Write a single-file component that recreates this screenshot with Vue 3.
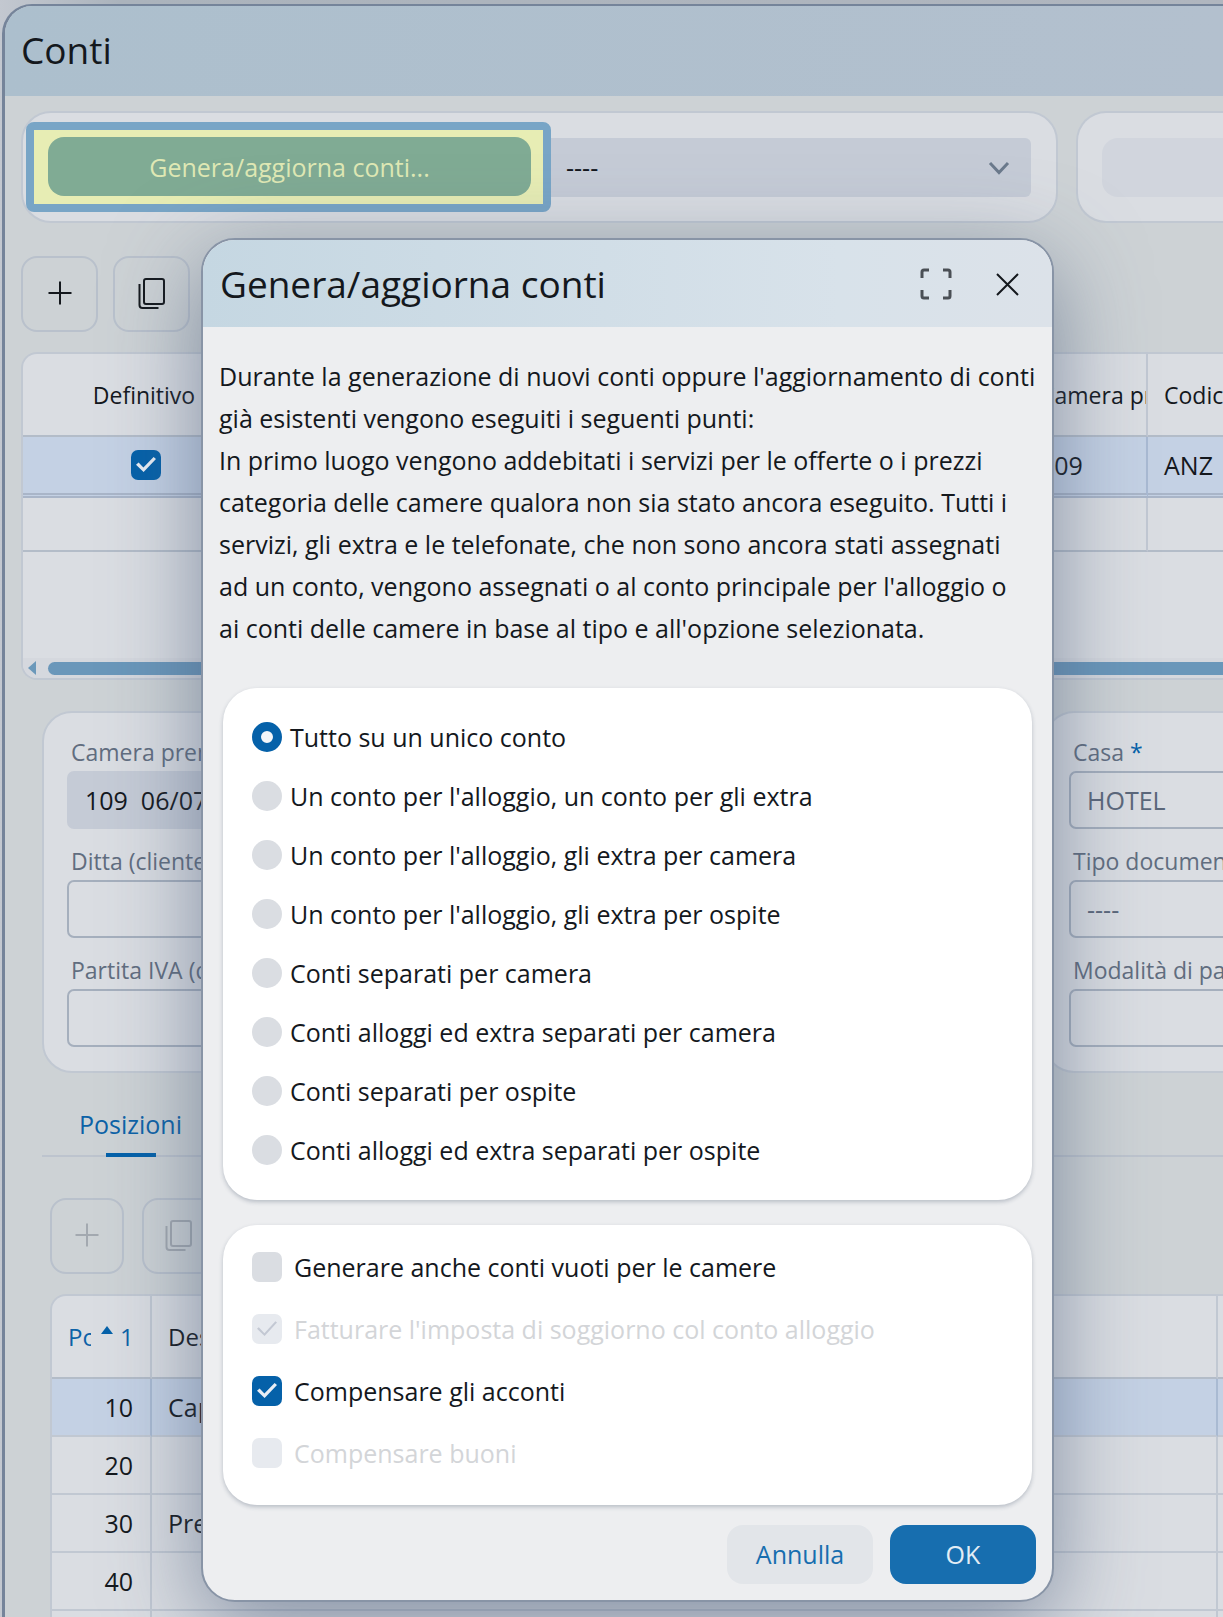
<template>
  <div class="page">
    <div class="window">
      <header class="window-header">
        <h1>Conti</h1>
      </header>

      <div class="top-bar">
        <div class="panel action-panel">
          <div class="highlight">
            <button type="button" class="generate-btn">Genera/aggiorna conti...</button>
          </div>
          <div class="select-wrap">
            <select v-model="filter" class="filter-select" aria-label="Filtro">
              <option value="">----</option>
            </select>
            <svg class="chevron" viewBox="0 0 24 16" aria-hidden="true">
              <path d="M3 3l9 9.500L21 3" />
            </svg>
          </div>
        </div>
        <div class="panel side-panel">
          <button type="button" class="empty-btn" aria-label="Opzioni"></button>
        </div>
      </div>

      <div class="icon-row">
        <button type="button" class="icon-btn" aria-label="Nuovo">
          <svg viewBox="0 0 30 30"><path d="M15 3.500v23M3.500 15h23" /></svg>
        </button>
        <button type="button" class="icon-btn" aria-label="Duplica">
          <svg class="copy" viewBox="0 0 30 34">
            <rect x="7" y="3" width="20" height="25" rx="2" />
            <path d="M2.500 8v21q0 3 3 3h16" />
          </svg>
        </button>
      </div>

      <div class="grid">
        <table>
          <colgroup>
            <col class="col-def" />
            <col />
            <col class="col-room" />
            <col class="col-code" />
          </colgroup>
          <thead>
            <tr>
              <th class="center">Definitivo</th>
              <th></th>
              <th>Camera pre</th>
              <th>Codice</th>
            </tr>
          </thead>
          <tbody>
            <tr class="selected">
              <td class="center">
                <input v-model="definitive" type="checkbox" class="check" aria-label="Definitivo" />
              </td>
              <td></td>
              <td>109</td>
              <td>ANZ</td>
            </tr>
            <tr>
              <td></td>
              <td></td>
              <td></td>
              <td></td>
            </tr>
          </tbody>
        </table>
        <div class="scrollbar">
          <svg viewBox="0 0 8 14" aria-hidden="true"><path d="M8 0v14L0 7z" /></svg>
          <div class="thumb"></div>
        </div>
      </div>

      <div class="details">
        <div class="forms">
          <div class="panel form-panel">
            <div v-for="field in leftFields" :key="field.id" class="field">
              <label :for="field.id">{{ field.label }}</label>
              <input :id="field.id" v-model="field.value" type="text" :class="{ filled: field.filled }" />
            </div>
          </div>
          <div class="panel form-panel form-side">
            <div v-for="field in rightFields" :key="field.id" class="field">
              <label :for="field.id">{{ field.label }}<span v-if="field.required" class="required"> *</span></label>
              <select :id="field.id" v-model="field.value">
                <option :value="field.value">{{ field.value }}</option>
              </select>
            </div>
          </div>
        </div>

        <nav class="tabs">
          <a href="#posizioni" class="tab">Posizioni</a>
        </nav>

        <div class="positions">
          <div class="icon-row small">
            <button type="button" class="icon-btn" disabled aria-label="Nuova posizione">
              <svg viewBox="0 0 30 30"><path d="M15 3.500v23M3.500 15h23" /></svg>
            </button>
            <button type="button" class="icon-btn" disabled aria-label="Duplica posizione">
              <svg class="copy" viewBox="0 0 30 34">
                <rect x="7" y="3" width="20" height="25" rx="2" />
                <path d="M2.500 8v21q0 3 3 3h16" />
              </svg>
            </button>
          </div>
          <div class="pos-grid">
            <table>
              <colgroup>
                <col class="col-pos" />
                <col />
                <col class="col-end" />
              </colgroup>
              <thead>
                <tr>
                  <th>
                    <div class="sorted">
                      <span class="cut">Pos</span>
                      <svg viewBox="0 0 12 8" aria-hidden="true"><path d="M6 0l6 8H0z" /></svg>
                      <span>1</span>
                    </div>
                  </th>
                  <th>Descrizione</th>
                  <th></th>
                </tr>
              </thead>
              <tbody>
                <tr v-for="row in positions" :key="row.pos" :class="{ selected: row.pos === '10' }">
                  <td class="number">{{ row.pos }}</td>
                  <td>{{ row.text }}</td>
                  <td></td>
                </tr>
              </tbody>
            </table>
          </div>
        </div>
      </div>
    </div>

    <div class="dialog" role="dialog" aria-labelledby="dialog-title">
      <header class="dialog-header">
        <h2 id="dialog-title">Genera/aggiorna conti</h2>
        <button type="button" class="head-btn" aria-label="Schermo intero">
          <svg viewBox="0 0 32 32">
            <path d="M2 10V4q0-2 2-2h5M23 2h5q2 0 2 2v6M30 22v6q0 2-2 2h-5M9 30H4q-2 0-2-2v-6" class="thick" />
          </svg>
        </button>
        <button type="button" class="head-btn" aria-label="Chiudi">
          <svg viewBox="0 0 32 32"><path d="M5 6l21 21M26 6L5 27" /></svg>
        </button>
      </header>

      <div class="dialog-body">
        <p class="intro">
          Durante la generazione di nuovi conti oppure l'aggiornamento di conti<br />
          già esistenti vengono eseguiti i seguenti punti:<br />
          In primo luogo vengono addebitati i servizi per le offerte o i prezzi<br />
          categoria delle camere qualora non sia stato ancora eseguito. Tutti i<br />
          servizi, gli extra e le telefonate, che non sono ancora stati assegnati<br />
          ad un conto, vengono assegnati o al conto principale per l'alloggio o<br />
          ai conti delle camere in base al tipo e all'opzione selezionata.
        </p>

        <div class="card">
          <label v-for="(mode, index) in modes" :key="index" class="radio-row">
            <input v-model="selectedMode" type="radio" name="mode" class="radio" :value="index" />
            {{ mode }}
          </label>
        </div>

        <div class="card checks">
          <label v-for="option in options" :key="option.text" class="check-row" :class="{ disabled: option.disabled }">
            <input v-model="option.checked" type="checkbox" class="check" :disabled="option.disabled" />
            {{ option.text }}
          </label>
        </div>
      </div>

      <footer class="dialog-footer">
        <button type="button" class="btn btn-cancel">Annulla</button>
        <button type="button" class="btn btn-ok">OK</button>
      </footer>
    </div>
  </div>
</template>

<script setup>
import { ref } from 'vue'

const filter = ref('')
const definitive = ref(true)
const selectedMode = ref(0)

const leftFields = ref([
  { id: 'camera', label: 'Camera prenotata', value: '109  06/07', filled: true },
  { id: 'ditta', label: 'Ditta (cliente)', value: '' },
  { id: 'iva', label: 'Partita IVA (ditta)', value: '' }
])

const rightFields = ref([
  { id: 'casa', label: 'Casa', value: 'HOTEL', required: true },
  { id: 'tipo', label: 'Tipo documento', value: '----' },
  { id: 'modalita', label: 'Modalità di pagamento', value: '' }
])

const positions = [
  { pos: '10', text: 'Capodanno' },
  { pos: '20', text: '' },
  { pos: '30', text: 'Prenotazione' },
  { pos: '40', text: '' },
  { pos: '', text: '' }
]

const modes = [
  'Tutto su un unico conto',
  "Un conto per l'alloggio, un conto per gli extra",
  "Un conto per l'alloggio, gli extra per camera",
  "Un conto per l'alloggio, gli extra per ospite",
  'Conti separati per camera',
  'Conti alloggi ed extra separati per camera',
  'Conti separati per ospite',
  'Conti alloggi ed extra separati per ospite'
]

const options = ref([
  { text: 'Generare anche conti vuoti per le camere', checked: false, disabled: false },
  { text: "Fatturare l'imposta di soggiorno col conto alloggio", checked: true, disabled: true },
  { text: 'Compensare gli acconti', checked: true, disabled: false },
  { text: 'Compensare buoni', checked: false, disabled: true }
])
</script>

<style>
body {
  margin: 0;
}
</style>

<style scoped>
.page {
  position: relative;
  height: 100vh;
  overflow: hidden;
  box-sizing: border-box;
  padding: 4px 0 0 2px;
  background: linear-gradient(90deg, #c3c8d0, #abb3bc 120px, #b0b6bf);
  color: #14181d;
  font-family: "Open Sans", "Noto Sans", sans-serif;
  font-size: 25px;
}

.page *,
.page *::before {
  box-sizing: border-box;
}

button,
input,
select {
  margin: 0;
  color: inherit;
  font: inherit;
}

svg {
  display: block;
  fill: none;
  stroke: currentColor;
  stroke-width: 2;
}

.window {
  border: 2px solid #75849a;
  border-left-width: 3px;
  border-right: none;
  border-bottom: none;
  border-radius: 30px 0 0 0;
  height: 100%;
  overflow: hidden;
  background: #cdd2d5;
}

.window-header {
  height: 90px;
  display: flex;
  align-items: center;
  padding-left: 16px;
  background: linear-gradient(90deg, #acbfcd, #b3c0ce);
}

h1,
h2 {
  margin: 0;
  font-size: 37px;
  font-weight: 400;
  line-height: 48px;
}

h1 {
  padding-bottom: 2px;
}

.panel {
  border: 2px solid #c1c8d2;
  border-radius: 30px;
  background: #dadde2;
}

.top-bar {
  display: flex;
  gap: 18px;
  padding: 15px 0 0 16px;
}

.action-panel {
  flex: 1;
  height: 112px;
  display: flex;
  align-items: center;
  padding: 0 25px 0 3px;
}

.highlight {
  flex: 0 0 525px;
  height: 90px;
  display: flex;
  padding: 7px 12px 8px 14px;
  border: 8px solid #78a5c6;
  border-radius: 8px;
  background: #e7edb4;
}

.generate-btn {
  flex: 1;
  border: none;
  border-radius: 16px;
  background: #80ab94;
  color: #dfe8b4;
}

.select-wrap {
  position: relative;
  flex: 1;
}

.filter-select {
  display: block;
  width: 100%;
  height: 59px;
  padding: 0 15px;
  border: none;
  border-radius: 0 6px 6px 0;
  appearance: none;
  background: #c5cbd6;
}

.chevron {
  position: absolute;
  top: 22px;
  right: 20px;
  width: 24px;
  height: 16px;
  color: #6b7a8c;
  stroke-width: 3;
}

.side-panel {
  flex: 0 0 147px;
  height: 112px;
  display: flex;
  align-items: center;
  padding-left: 24px;
  border-right: none;
  border-radius: 30px 0 0 30px;
}

.empty-btn {
  flex: 1;
  height: 59px;
  border: none;
  border-radius: 16px 0 0 16px;
  background: #d1d5dd;
}

.icon-row {
  display: flex;
  gap: 15px;
  padding: 33px 0 0 16px;
}

.icon-btn {
  width: 77px;
  height: 76px;
  display: flex;
  align-items: center;
  justify-content: center;
  padding: 0 0 2px;
  border: 2px solid #b9c1cc;
  border-radius: 16px;
  background: transparent;
}

.icon-btn svg {
  height: 30px;
}

.icon-btn .copy {
  height: 34px;
}

.icon-btn:disabled {
  color: #a3a9b0;
}

.grid {
  height: 328px;
  display: flex;
  flex-direction: column;
  margin: 20px 0 0 16px;
  overflow: hidden;
  border: 2px solid #c1c8d2;
  border-right: none;
  border-radius: 16px 0 0 16px;
  background: #dadde2;
}

table {
  width: 100%;
  border-spacing: 0;
  table-layout: fixed;
}

th,
td {
  overflow: hidden;
  padding: 0 0 0 16px;
  border-right: 2px solid #c1c8d2;
  border-bottom: 2px solid #b3bcc8;
  font-weight: 400;
  text-align: left;
  white-space: nowrap;
}

th {
  font-size: 24px;
}

th:last-child,
td:last-child {
  border-right: none;
}

.grid th {
  height: 83px;
  font-size: 23px;
}

.grid td {
  height: 54px;
}

.grid .selected td {
  height: 61px;
  border-bottom: 5px double #a9b5c8;
}

.grid .center {
  padding: 0;
  text-align: center;
}

.grid th.center {
  padding-right: 4px;
}

.center .check {
  display: grid;
  margin: 0 auto;
}

.col-def {
  width: 248px;
}

.col-room {
  width: 124px;
}

.col-code {
  width: 75px;
}

.selected {
  background: #c4d1e4;
}

.selected td {
  border-color: #a9bad2;
}

.scrollbar {
  display: flex;
  align-items: center;
  gap: 12px;
  height: 20px;
  margin-top: auto;
  padding-left: 5px;
  background: #d5d8de;
}

.scrollbar svg {
  width: 8px;
  height: 14px;
  fill: #6b98ba;
  stroke: none;
}

.thumb {
  flex: 1;
  height: 13px;
  border-radius: 7px 0 0 7px;
  background: #6a97ba;
}

.check {
  appearance: none;
  display: grid;
  place-items: center;
  flex: none;
  width: 30px;
  height: 30px;
  border-radius: 7px;
  background: #dadde2;
}

.check:checked {
  background: #0561a9;
}

.check:checked::before {
  content: "";
  width: 20px;
  height: 16px;
  background: #e9eef5;
  clip-path: polygon(0 49%, 13% 35%, 37% 66%, 88% 0, 100% 13%, 38% 94%);
}

.check:disabled {
  background: #e7eaef;
}

.check:disabled::before {
  background: #c3c8d3;
  clip-path: polygon(0 49%, 9% 39%, 37% 76%, 92% 2%, 100% 10%, 38% 94%);
}

.details {
  padding-left: 37px;
}

.forms {
  display: flex;
  gap: 20px;
  margin-top: 31px;
}

.form-panel {
  flex: 1;
  min-width: 0;
  height: 362px;
  padding: 24px 24px 0 23px;
}

.form-side {
  flex: 0 0 179px;
  padding-right: 0;
  border-right: none;
  border-radius: 30px 0 0 30px;
}

.field {
  height: 109px;
  overflow: hidden;
}

.field label {
  display: block;
  height: 34px;
  padding-left: 4px;
  color: #616d7f;
  font-size: 23px;
  line-height: 30px;
  white-space: nowrap;
}

.required {
  color: #0561a9;
}

.field input,
.field select {
  display: block;
  width: 100%;
  height: 58px;
  padding: 0 16px;
  border: 2px solid #a5afbd;
  border-radius: 7px;
  appearance: none;
  background: transparent;
  white-space: pre;
}

.field select {
  border-right: none;
  border-radius: 7px 0 0 7px;
  color: #5b677a;
}

.field .filled {
  border-color: #c5cbd6;
  background: #c5cbd6;
}

.tabs {
  display: flex;
  height: 84px;
  padding-left: 37px;
  border-bottom: 2px solid #bdc4ce;
}

.tab {
  position: relative;
  height: 84px;
  color: #0c62a7;
  line-height: 102px;
  text-decoration: none;
}

.tab::after {
  content: "";
  position: absolute;
  bottom: 0;
  left: 50%;
  width: 50px;
  height: 4px;
  margin-left: -25px;
  background: #0561a9;
}

.positions {
  padding-left: 8px;
}

.icon-row.small {
  gap: 18px;
  padding: 41px 0 0;
}

.small .icon-btn {
  width: 74px;
}

.pos-grid {
  height: 400px;
  margin-top: 20px;
  overflow: hidden;
  border: 2px solid #c1c8d2;
  border-right: none;
  border-radius: 16px 0 0 0;
  background: #dadde2;
}

.pos-grid th {
  height: 83px;
}

.pos-grid td {
  height: 58px;
  border-bottom-color: #c1c8d2;
}

.col-pos {
  width: 100px;
}

.col-end {
  width: 5px;
}

.pos-grid .number {
  padding: 0 17px 0 0;
  text-align: right;
}

.sorted {
  display: flex;
  align-items: center;
  color: #0c62a7;
}

.cut {
  width: 23px;
  overflow: hidden;
}

.sorted svg {
  width: 12px;
  height: 8px;
  margin: 0 7px 14px 10px;
  fill: #0561a9;
  stroke: none;
}

.dialog {
  position: absolute;
  top: 238px;
  left: 201px;
  right: 169px;
  overflow: hidden;
  border: 2px solid #8894a6;
  border-radius: 34px;
  background: #edeef0;
  box-shadow: 0 24px 90px rgba(72, 90, 120, 0.6);
}

.dialog-header {
  display: flex;
  align-items: center;
  gap: 40px;
  height: 87px;
  padding: 0 28px 0 17px;
  background: linear-gradient(90deg, #c5d7e2, #d8e2ea 75%, #dce2e9);
}

h2 {
  flex: 1;
}

.head-btn {
  width: 32px;
  height: 32px;
  padding: 0;
  border: none;
  background: none;
}

.head-btn svg {
  width: 32px;
  height: 32px;
}

.thick {
  stroke: #4a4f55;
  stroke-width: 3;
}

.dialog-body {
  padding: 28px 20px 0;
}

.intro {
  height: 333px;
  margin: 0 -12px 0 -4px;
  line-height: 42px;
  white-space: nowrap;
}

.card {
  height: 512px;
  padding: 19px 28px 0 29px;
  border-radius: 34px;
  background: #fff;
  box-shadow: 0 2px 4px rgba(60, 75, 100, 0.3);
}

.radio-row,
.check-row {
  display: flex;
  align-items: center;
  height: 59px;
  gap: 8px;
}

.radio {
  appearance: none;
  width: 30px;
  height: 30px;
  border-radius: 50%;
  background: #dadde2;
}

.radio:checked {
  border: 9px solid #0561a9;
  background: #f4f6f9;
}

.checks {
  height: 280px;
  margin-top: 25px;
  padding-top: 11px;
}

.check-row {
  height: 62px;
  gap: 12px;
}

.check-row.disabled {
  color: #d3d5d8;
}

.dialog-footer {
  display: flex;
  justify-content: flex-end;
  gap: 17px;
  padding: 20px 16px 16px;
}

.btn {
  width: 146px;
  height: 59px;
  padding: 0 0 2px;
  border: none;
  border-radius: 16px;
  font-weight: 500;
}

.btn-cancel {
  background: #e2e5e9;
  color: #176eaf;
}

.btn-ok {
  background: #176eaf;
  color: #e3edf5;
}
</style>
